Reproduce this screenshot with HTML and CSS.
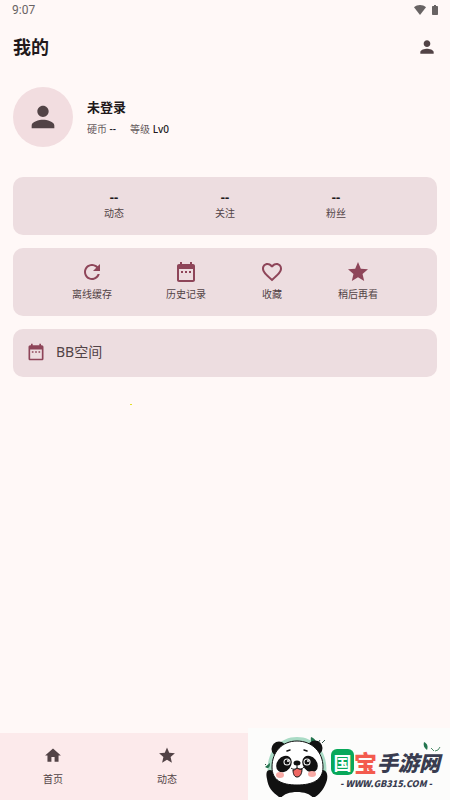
FILE: index.html
```
<!DOCTYPE html>
<html lang="zh-CN">
<head>
    <meta charset="UTF-8">
    <meta name="viewport" content="width=device-width, initial-scale=1.0">
    <title>我的</title>
    <link rel="stylesheet" href="styles.css">
</head>
<body>
    <!-- Shared icons -->
    <svg class="sprite" aria-hidden="true">
        <symbol id="icon-person" viewBox="0 0 24 24"><path d="M12 12c2.21 0 4-1.79 4-4s-1.79-4-4-4-4 1.79-4 4 1.79 4 4 4zm0 2c-2.67 0-8 1.34-8 4v2h16v-2c0-2.66-5.33-4-8-4z"/></symbol>
        <symbol id="icon-star" viewBox="0 0 24 24"><path d="M12 17.27L18.18 21l-1.64-7.03L22 9.24l-7.19-.61L12 2 9.19 8.63 2 9.24l5.46 4.73L5.82 21z"/></symbol>
        <symbol id="icon-calendar" viewBox="0 0 24 24"><path d="M9 11H7v2h2v-2zm4 0h-2v2h2v-2zm4 0h-2v2h2v-2zm2-7h-1V2h-2v2H8V2H6v2H5c-1.11 0-1.99.9-1.99 2L3 20c0 1.1.89 2 2 2h14c1.1 0 2-.9 2-2V6c0-1.1-.9-2-2-2zm0 16H5V9h14v11z"/></symbol>
    </svg>

    <div class="status-bar">
        <span>9:07</span>
        <div class="status-icons">
            <svg class="wifi" viewBox="0 0 24 20"><path d="M12 20L24 4.500C20.500 1.800 16.500 0 12 0S3.500 1.800 0 4.500z"/></svg>
            <svg class="battery" viewBox="0 0 12 20"><path d="M4 0h4v2h2.500C11.300 2 12 2.700 12 3.500v15c0 .8-.7 1.500-1.500 1.500h-9C.7 20 0 19.300 0 18.500v-15C0 2.700.7 2 1.500 2H4z"/></svg>
        </div>
    </div>

    <header class="top-bar">
        <h1>我的</h1>
        <button class="account-btn" aria-label="账号"><svg><use href="#icon-person"/></svg></button>
    </header>

    <main>
        <section class="profile">
            <div class="avatar"><svg><use href="#icon-person"/></svg></div>
            <div>
                <h2>未登录</h2>
                <p class="meta"><span>硬币 <b>--</b></span><span>等级 <b>Lv0</b></span></p>
            </div>
        </section>

        <section class="card stats">
            <a href="#"><b>--</b><span>动态</span></a>
            <a href="#"><b>--</b><span>关注</span></a>
            <a href="#"><b>--</b><span>粉丝</span></a>
        </section>

        <section class="card actions">
            <a href="#"><svg viewBox="0 0 24 24"><path d="M17.650 6.350C16.200 4.900 14.210 4 12 4c-4.420 0-7.990 3.580-7.990 8s3.570 8 7.990 8c3.730 0 6.840-2.550 7.730-6h-2.080c-.82 2.330-3.040 4-5.650 4-3.310 0-6-2.690-6-6s2.690-6 6-6c1.660 0 3.140.69 4.220 1.780L13 11h7V4l-2.350 2.350z"/></svg><span>离线缓存</span></a>
            <a href="#"><svg><use href="#icon-calendar"/></svg><span>历史记录</span></a>
            <a href="#"><svg viewBox="0 0 24 24"><path d="M16.500 3c-1.740 0-3.410.81-4.500 2.090C10.910 3.810 9.240 3 7.500 3 4.420 3 2 5.420 2 8.500c0 3.780 3.400 6.860 8.550 11.540L12 21.350l1.450-1.320C18.600 15.360 22 12.280 22 8.500 22 5.420 19.580 3 16.500 3zm-4.400 15.550l-.1.100-.1-.1C7.140 14.240 4 11.390 4 8.500 4 6.500 5.500 5 7.500 5c1.540 0 3.040.99 3.570 2.360h1.870C13.460 5.990 14.960 5 16.500 5c2 0 3.500 1.500 3.500 3.500 0 2.890-3.140 5.740-7.900 10.050z"/></svg><span>收藏</span></a>
            <a href="#"><svg><use href="#icon-star"/></svg><span>稍后再看</span></a>
        </section>

        <a class="card space-link" href="#"><svg><use href="#icon-calendar"/></svg><span>BB空间</span></a>
        <div class="spark"></div>
    </main>

    <nav class="bottom-nav">
        <a href="#"><svg viewBox="0 0 24 24"><path d="M10 20v-6h4v6h5v-8h3L12 3 2 12h3v8z"/></svg><span>首页</span></a>
        <a href="#"><svg><use href="#icon-star"/></svg><span>动态</span></a>
    </nav>

    <aside class="site-mark">
        <svg class="panda" viewBox="0 0 66 64" aria-hidden="true">
            <path d="M4 44C-2 20 12 1 32 1s34 19 28 43z" fill="#a9dbc5"/>
            <path d="M46 1c5 2 6 5 5 9-4-1-6-5-5-9zM0 31l5-4c0 4-1 5-3 5z" fill="#23744e"/>
            <path d="M53 7l2-3M57 7l3-3M-1 27l2 2" stroke="#34544a" stroke-width="1"/>
            <!-- Ears, arms and belly -->
            <circle cx="14" cy="13" r="7.500" fill="#111"/>
            <circle cx="50" cy="12" r="7.500" fill="#111"/>
            <path d="M5 34c-4 0-4 4-3 9 1 8 5 13 12 18h36c6-4 10-10 12-17 1-5 0-9-4-10-3 0-5 3-6 8H11c-1-5-3-8-6-8z" fill="#111"/>
            <path d="M16 62c5-8 27-8 32 0z" fill="#fcfcfb"/>
            <!-- Face -->
            <path d="M32 5c15 0 26 11 26 26 0 13-10 18-26 18S7 44 7 31C7 16 17 5 32 5z" fill="#fff" stroke="#111" stroke-width="1"/>
            <ellipse cx="19" cy="28" rx="7" ry="9" transform="rotate(38 19 28)" fill="#111"/>
            <ellipse cx="45" cy="28" rx="7" ry="9" transform="rotate(-38 45 28)" fill="#111"/>
            <circle cx="22" cy="26" r="3.500" fill="#fff"/><circle cx="42" cy="26" r="3.500" fill="#fff"/>
            <circle cx="22" cy="26" r="2.500" fill="#111"/><circle cx="42" cy="26" r="2.500" fill="#111"/>
            <circle cx="23" cy="25" r="1" fill="#fff"/><circle cx="43" cy="25" r="1" fill="#fff"/>
            <path d="M22 15l3-1M39 14l3 1" stroke="#111" stroke-width="1.500" stroke-linecap="round"/>
            <ellipse cx="32" cy="27" rx="3.500" ry="2.500" fill="#111"/>
            <path d="M32 29v3M26 32c2 2 5 1 6 0 1 1 5 2 7-1" fill="none" stroke="#111" stroke-width="1"/>
            <path d="M28 34c2 0 3-1 4-2 2 1 3 2 5 1 0 5-2 8-5 8s-4-4-4-7z" fill="#ee6661" stroke="#111" stroke-width="1"/>
            <ellipse cx="15" cy="39" rx="4" ry="3" fill="#f8aaa5"/><ellipse cx="47" cy="38" rx="4" ry="3" fill="#f8aaa5"/>
        </svg>
        <div class="mark-text">
            <div class="mark-name"><span class="green">国</span><span class="red">宝</span><span class="dark">手游网</span></div>
            <div class="mark-url">- WWW.GB315.COM -</div>
        </div>
        <svg class="leaves" viewBox="0 0 20 10" aria-hidden="true"><path d="M2 0c4 2 4 5 3 8C2 6 1 3 2 0z" fill="#23744e"/><path d="M9 6l3 3M18 5l-2 3-3 1" fill="none" stroke="#4d8b68"/></svg>
    </aside>
</body>
</html>
```

FILE: styles.css
```
* {
    box-sizing: border-box;
}
body {
    margin: 0;
    min-height: 100vh;
    display: flex;
    flex-direction: column;
    background: #fff8f7;
    color: #22191b;
    font-family: "Noto Sans", "Noto Sans CJK SC", sans-serif;
    font-size: 10px;
    line-height: 16px;
}
h1, h2, p {
    margin: 0;
}
a {
    color: inherit;
    text-decoration: none;
}
svg {
    display: block;
    fill: currentColor;
}
.sprite {
    position: absolute;
    width: 0;
    height: 0;
}

/* Header */
.status-bar {
    display: flex;
    justify-content: space-between;
    align-items: center;
    height: 20px;
    padding: 0 12px;
    color: #686363;
    font-family: Roboto, sans-serif;
    font-size: 12px;
}
.status-icons {
    display: flex;
    align-items: center;
    gap: 6px;
}
.wifi {
    width: 12px;
    height: 10px;
}
.battery {
    width: 6px;
    height: 10px;
}
.top-bar {
    display: flex;
    justify-content: space-between;
    align-items: center;
    height: 54px;
    padding: 0 13px;
}
h1 {
    font-size: 18px;
    line-height: 24px;
    font-weight: 700;
}
.account-btn {
    padding: 0;
    border: none;
    background: none;
    color: #524346;
    cursor: pointer;
}
.account-btn svg {
    width: 20px;
    height: 20px;
}

/* Profile */
main {
    flex: 1;
    display: flex;
    flex-direction: column;
    gap: 13px;
    padding: 13px;
}
.profile {
    display: flex;
    align-items: center;
    gap: 14px;
    margin-bottom: 17px;
}
.avatar {
    display: flex;
    align-items: center;
    justify-content: center;
    width: 60px;
    height: 60px;
    border-radius: 50%;
    background: #f2dde0;
    color: #524346;
}
.avatar svg {
    width: 34px;
    height: 34px;
}
h2 {
    margin-bottom: 4px;
    font-size: 13px;
    line-height: 20px;
    font-weight: 700;
}
.meta {
    display: flex;
    gap: 14px;
    color: #665b5d;
}
.meta b {
    color: #22191b;
    font-weight: 500;
}

/* Cards */
.card {
    display: flex;
    border-radius: 10px;
    background: #eddde0;
    color: #524346;
}
.stats,
.actions {
    justify-content: space-evenly;
}
.stats {
    padding: 12px 0 14px;
}
.stats a,
.actions a,
.bottom-nav a {
    display: flex;
    flex-direction: column;
    align-items: center;
}
.stats b {
    color: #22191b;
    font-size: 13px;
    font-weight: 700;
}
.actions {
    padding: 12px 5px 14px;
}
.actions a {
    gap: 2px;
}
.actions svg {
    width: 24px;
    height: 24px;
    color: #8e4559;
}
.space-link {
    align-items: center;
    gap: 10px;
    padding: 11px 13px 13px;
    font-size: 14px;
    line-height: 24px;
}
.space-link svg {
    width: 20px;
    height: 20px;
    color: #8e4559;
}
.spark {
    width: 2px;
    height: 1px;
    margin: 14px 117px;
    background: #e3df28;
}

/* Bottom navigation */
.bottom-nav {
    display: flex;
    gap: 94px;
    height: 67px;
    padding: 13px 43px;
    background: #fceaeb;
    color: #524346;
}
.bottom-nav a {
    gap: 6px;
}
.bottom-nav svg {
    width: 20px;
    height: 20px;
}

/* Site mark over the right side of the navigation */
.site-mark {
    position: fixed;
    right: 0;
    bottom: 0;
    display: flex;
    width: 202px;
    height: 72px;
    padding: 8px 0 0 17px;
    background: #fcfcfb;
}
.panda {
    flex: none;
    width: 66px;
    height: 64px;
}
.mark-text {
    padding-top: 11px;
    font-family: "Noto Sans CJK SC", sans-serif;
}
.mark-name {
    display: flex;
    align-items: center;
    height: 30px;
    font-size: 21px;
    font-weight: 900;
    white-space: nowrap;
}
.green {
    display: flex;
    align-items: center;
    justify-content: center;
    width: 23px;
    height: 26px;
    border-radius: 6px;
    background: #08a85a;
    color: #fff;
    font-size: 18px;
    font-weight: 700;
}
.red {
    color: #f35b4e;
    font-size: 23px;
}
.dark {
    color: #393c50;
    font-style: italic;
}
.mark-url {
    padding-left: 9px;
    color: #393c50;
    font-size: 9px;
    font-style: italic;
    font-weight: 900;
    line-height: 14px;
    white-space: nowrap;
}
.leaves {
    position: absolute;
    top: 14px;
    right: 8px;
    width: 20px;
    height: 10px;
}
```
